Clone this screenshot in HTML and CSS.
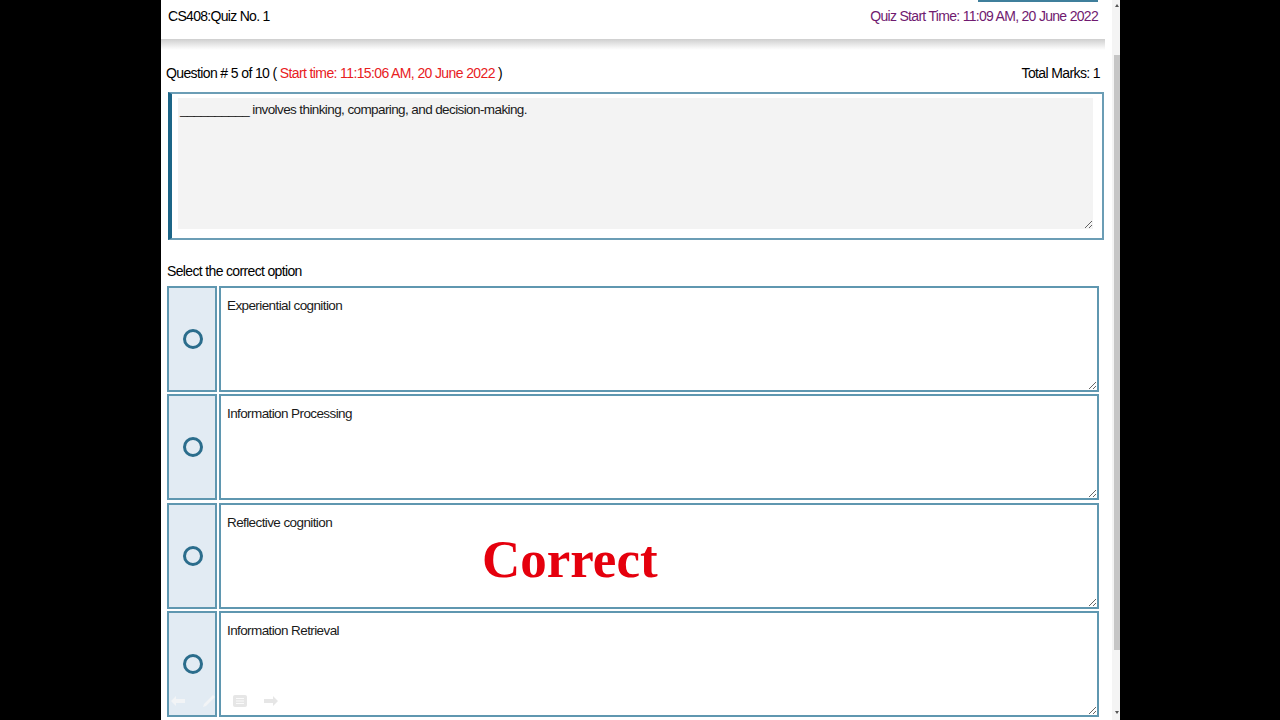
FILE: index.html
```html
<!DOCTYPE html>
<html lang="en">
  <head>
    <meta charset="UTF-8" />
    <title>CS408 Quiz</title>
    <link rel="stylesheet" href="styles.css">
  </head>
  <body>
    <div class="screen">
      <div class="page">
        <div class="top-btn"></div>
        <div class="header">
          <span class="quiz-title">CS408:Quiz No. 1</span>
          <span class="quiz-start">Quiz Start Time: 11:09 AM, 20 June 2022</span>
        </div>
        <div class="header-shadow"></div>

        <div class="content">
          <div class="question-line">
            <span>Question # 5 of 10 ( <span class="red">Start time: 11:15:06 AM, 20 June 2022</span> )</span>
            <span>Total Marks: 1</span>
          </div>

          <div class="question-box">
            <textarea class="question-text" readonly>__________ involves thinking, comparing, and decision-making.</textarea>
          </div>

          <div class="select-label">Select the correct option</div>

          <div class="options">
            <div class="option">
              <div class="radio-cell"><span class="radio"></span></div>
              <textarea class="option-text" readonly>Experiential cognition</textarea>
            </div>
            <div class="option">
              <div class="radio-cell"><span class="radio"></span></div>
              <textarea class="option-text" readonly>Information Processing</textarea>
            </div>
            <div class="option">
              <div class="radio-cell"><span class="radio"></span></div>
              <textarea class="option-text" readonly>Reflective cognition</textarea>
            </div>
            <div class="option">
              <div class="radio-cell"><span class="radio"></span></div>
              <textarea class="option-text" readonly>Information Retrieval</textarea>
            </div>
          </div>
        </div>
      </div>

      <div class="scrollbar">
        <span class="arrow-up"></span>
        <div class="thumb"></div>
        <span class="arrow-down"></span>
      </div>

      <!-- overlay from the video -->
      <div class="correct">Correct</div>

      <div class="player-icons">
        <svg width="16" height="14" viewBox="0 0 16 14"><path d="M6 2 L1 7 L6 12 V9 H15 V5 H6 Z" fill="#f2f4f6"/></svg>
        <svg width="16" height="14" viewBox="0 0 16 14"><path d="M2 13 L3 10 L12 1 L14 3 L5 12 Z" fill="#f2f4f6"/></svg>
        <svg width="16" height="14" viewBox="0 0 16 14"><rect x="1" y="1" width="14" height="12" rx="2" fill="#e6e6e6"/><path d="M4 4.5 H12 M4 7 H12 M4 9.5 H12" stroke="#fafafa" stroke-width="1.2"/></svg>
        <svg width="16" height="14" viewBox="0 0 16 14"><path d="M10 2 L15 7 L10 12 V9 H1 V5 H10 Z" fill="#e6e6e6"/></svg>
      </div>
    </div>
  </body>
</html>
```

FILE: styles.css
```css
body {
  margin: 0;
  background: #000;
  font-family: "Liberation Sans", Arial, sans-serif;
  color: #000;
}

.screen {
  position: relative;
  margin-left: 161px;
  width: 959px;
  height: 720px;
  background: #fff;
  display: flex;
  overflow: hidden;
}

.page {
  flex: 1;
  position: relative;
}

.top-btn {
  position: absolute;
  top: 0;
  left: 817px;
  width: 120px;
  height: 2px;
  background: #3f7f9c;
}

.header {
  height: 39px;
  margin-right: 7px;
  padding: 8px 7px 0 7px;
  box-sizing: border-box;
  display: flex;
  justify-content: space-between;
  font-size: 14px;
  line-height: 16px;
  letter-spacing: -0.7px;
}

.quiz-start {
  color: #701a70;
}

.header-shadow {
  height: 11px;
  margin-right: 7px;
  background: linear-gradient(#cfcfcf, #f6f6f6 80%, #fff);
}

.content {
  padding: 0 8px 0 5px;
}

.question-line {
  margin-top: 15px;
  display: flex;
  justify-content: space-between;
  padding-right: 4px;
  font-size: 14px;
  line-height: 16px;
  letter-spacing: -0.62px;
}

.red {
  color: #e8201e;
}

.question-box {
  margin: 11px 0 0 2px;
  border: 2px solid #6b9db5;
  border-left: 4px solid #1c6587;
  padding: 4px 9px 9px 6px;
}

textarea {
  display: block;
  width: 100%;
  box-sizing: border-box;
  font-family: "Liberation Sans", Arial, sans-serif;
  font-size: 13.5px;
  line-height: 16px;
  letter-spacing: -0.6px;
  color: #1a1a1a;
  outline: none;
}

.question-text {
  height: 131px;
  background: #f3f3f3;
  border: none;
  padding: 4px 2px;
}

.select-label {
  margin: 23px 0 0 1px;
  font-size: 14px;
  line-height: 16px;
  letter-spacing: -0.65px;
}

.options {
  margin: 7px 5px 0 1px;
  display: flex;
  flex-direction: column;
  gap: 2.4px;
}

.option {
  height: 106px;
  display: grid;
  grid-template-columns: 50px 1fr;
  gap: 2px;
}

.radio-cell {
  background: #e2ebf3;
  border: 2px solid #5f97b0;
  display: flex;
  align-items: center;
  justify-content: center;
}

.radio {
  width: 20px;
  height: 20px;
  box-sizing: border-box;
  border: 3px solid #2b6d8c;
  border-radius: 50%;
  margin-left: 2px;
}

.option-text {
  height: 106px;
  background: #fff;
  border: 2px solid #5f97b0;
  padding: 10px 6px;
}

.scrollbar {
  width: 8px;
  background: #f4f4f4;
  position: relative;
}

.thumb {
  margin: 55px 0 0 2px;
  width: 6px;
  height: 595px;
  background: #c6c6c6;
}

.arrow-up,
.arrow-down {
  position: absolute;
  left: 3px;
  width: 0;
  height: 0;
  border-left: 2px solid transparent;
  border-right: 2px solid transparent;
}

.arrow-up {
  top: 4px;
  border-bottom: 3px solid #555;
}

.arrow-down {
  bottom: 6px;
  border-top: 3px solid #555;
}

.correct {
  position: absolute;
  left: 321px;
  top: 533px;
  font-family: "Liberation Serif", "Times New Roman", serif;
  font-weight: bold;
  font-size: 53px;
  line-height: 53px;
  color: #e5000d;
}

.player-icons {
  position: absolute;
  left: 9px;
  top: 694px;
  display: flex;
  gap: 15px;
}
```
